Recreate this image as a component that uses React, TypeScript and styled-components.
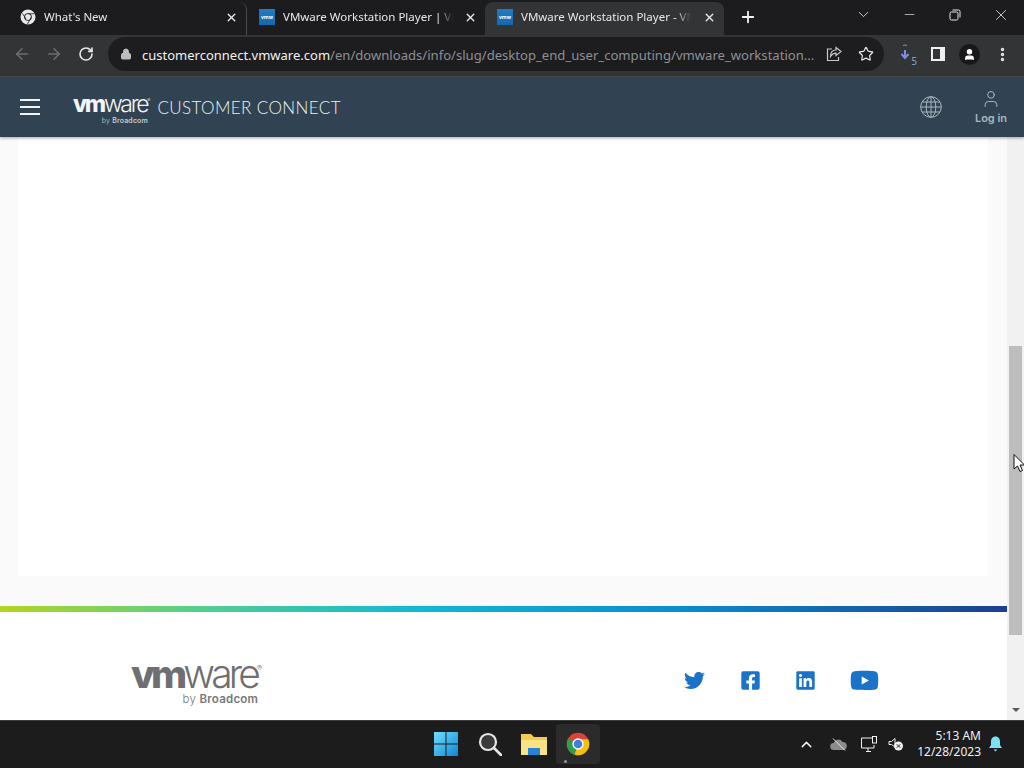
import React from 'react';
import styled, { createGlobalStyle } from 'styled-components';
import { FaTwitter, FaFacebookSquare, FaLinkedin, FaYoutube } from 'react-icons/fa';
import { ArrowLeft, ArrowRight, RotateCw, Lock, Star, X, Plus, ChevronDown, Minus, User, MoreVertical, ChevronUp } from 'lucide-react';

const GlobalStyle = createGlobalStyle`
  html, body {
    margin: 0;
    padding: 0;
    height: 768px;
    overflow: hidden;
    background: #fff;
    font-family: "Noto Sans", "Open Sans", sans-serif;
  }
`;

const TABS = [
  { title: "What's New", kind: 'chrome', width: 239 },
  { title: 'VMware Workstation Player | VM', kind: 'vmware', width: 238 },
  { title: 'VMware Workstation Player - VM', kind: 'vmware', width: 239, active: true },
];

const ChromeMark = ({ size, mono }: { size: number; mono?: boolean }) => (
  <svg width={size} height={size} viewBox="0 0 32 32">
    <circle cx="16" cy="16" r="15" fill={mono ? '#e8e8e8' : '#db4437'} />
    {!mono && (
      <>
        <path d="M16 16 L3 8.5 A15 15 0 0 0 11.5 30.3 Z" fill="#2f9e4f" />
        <path d="M16 16 L11.5 30.3 A15 15 0 0 0 29.5 9.5 L16 9.5 Z" fill="#f4c20d" />
      </>
    )}
    <circle cx="16" cy="16" r="7.6" fill={mono ? '#1c1c1e' : '#fff'} />
    <circle cx="16" cy="16" r="5.8" fill={mono ? '#e8e8e8' : '#3f7fe0'} />
    {mono && <path d="M5 9 L12 20 M16 9.5 H29 M22 17 L15 30" stroke="#1c1c1e" strokeWidth="1.6" />}
  </svg>
);

const Favicon = () => (
  <FaviconBox>
    <FaviconLabel>vmw</FaviconLabel>
  </FaviconBox>
);

export default function App() {
  return (
    <>
      <GlobalStyle />
      <Screen>
        <TabStrip>
          {TABS.map((tab, i) => (
            <Tab key={tab.title} $active={tab.active} $width={tab.width} $divider={i === 0}>
              {tab.kind === 'chrome' ? <ChromeMark size={16} mono /> : <Favicon />}
              <TabTitle>{tab.title}</TabTitle>
              <X size={13} strokeWidth={2.6} color="#e8e8e8" />
            </Tab>
          ))}
          <NewTab>
            <Plus size={18} strokeWidth={2.4} color="#f0f0f0" />
          </NewTab>
          <WindowControls>
            <WindowButton><ChevronDown size={17} strokeWidth={1.2} /></WindowButton>
            <WindowButton><Minus size={15} strokeWidth={1.1} /></WindowButton>
            <WindowButton>
              <svg width="12" height="12" viewBox="0 0 12 12" fill="none" stroke="#e8e8e8" strokeWidth="1">
                <rect x="1" y="3" width="8" height="8" rx="1.5" />
                <path d="M3.5 1 H9.5 A1.5 1.5 0 0 1 11 2.5 V8.5" />
              </svg>
            </WindowButton>
            <WindowButton><X size={18} strokeWidth={1.1} /></WindowButton>
          </WindowControls>
        </TabStrip>

        <Toolbar>
          <NavIcon><ArrowLeft size={18} color="#6d6e70" strokeWidth={2} /></NavIcon>
          <NavIcon><ArrowRight size={18} color="#6d6e70" strokeWidth={2} /></NavIcon>
          <NavIcon><RotateCw size={16} color="#e8e8e8" strokeWidth={2.4} /></NavIcon>
          <AddressBar>
            <Lock size={12} color="#bdbdbd" fill="#bdbdbd" />
            <AddressText>
              <Host>customerconnect.vmware.com</Host>
              /en/downloads/info/slug/desktop_end_user_computing/vmware_workstation...
            </AddressText>
            <svg width="16" height="16" viewBox="0 0 16 16" fill="none" stroke="#c8c8c8" strokeWidth="1.2">
              <path d="M6 3 H1.5 V14.5 H12.5 V11" />
              <path d="M15 5.5 L10 1.5 V4 C6 4 4.5 7 4.5 10.5 C6 8 8 7.2 10 7.2 V9.6 Z" />
            </svg>
            <Star size={16} color="#e8e8e8" strokeWidth={1.8} />
          </AddressBar>
          <ExtensionSlot>
            <svg width="20" height="22" viewBox="0 0 20 22">
              <path d="M7 8 V15 M3.5 12 L7 16 L10.5 12" stroke="#7d8ce8" strokeWidth="2" fill="none" />
              <path d="M5 3.5 Q7 2.5 9 3.5" stroke="#8a8fb0" strokeWidth="1" fill="none" />
            </svg>
            <BadgeDigit>5</BadgeDigit>
          </ExtensionSlot>
          <SidePanelIcon />
          <ProfileIcon><User size={13} color="#fff" fill="#fff" /></ProfileIcon>
          <MoreVertical size={17} color="#e8e8e8" strokeWidth={2.8} />
        </Toolbar>

        <Viewport>
          <NavBar>
            <Burger><i /><i /><i /></Burger>
            <Brand>
              <Wordmark>
                <LogoType $size={23}><b>vm</b>ware<sup>®</sup></LogoType>
                <ByLine $size={7}>by <b>Broadcom</b></ByLine>
              </Wordmark>
              <BrandTitle>CUSTOMER CONNECT</BrandTitle>
            </Brand>
            <NavActions>
              <svg width="22" height="22" viewBox="0 0 22 22" fill="none" stroke="#a9b5bd" strokeWidth="1">
                <circle cx="11" cy="11" r="10.3" />
                <ellipse cx="11" cy="11" rx="4.8" ry="10.3" />
                <path d="M11 0.7 V21.3 M0.7 11 H21.3 M2.2 6 H19.8 M2.2 16 H19.8" />
              </svg>
              <LogIn>
                <User size={20} color="#a9b5bd" strokeWidth={1.2} />
                <span>Log in</span>
              </LogIn>
            </NavActions>
          </NavBar>

          <PageRow>
            <Page>
              <Panel />
              <RainbowBar />
              <Footer>
                <Wordmark>
                  <LogoType $size={39} $dark><b>vm</b>ware<sup>®</sup></LogoType>
                  <ByLine $size={11.5} $dark>by <b>Broadcom</b></ByLine>
                </Wordmark>
                <Socials>
                  <SocialSlot><FaTwitter size={21} /></SocialSlot>
                  <SocialSlot><FaFacebookSquare size={21} /></SocialSlot>
                  <SocialSlot><FaLinkedin size={21} /></SocialSlot>
                  <SocialSlot><FaYoutube size={29} /></SocialSlot>
                </Socials>
              </Footer>
            </Page>
            <ScrollTrack>
              <ScrollThumb />
              <ScrollArrow />
            </ScrollTrack>
          </PageRow>
        </Viewport>

        <Taskbar>
          <TaskIcons>
            <TaskIcon>
              <svg width="24" height="24" viewBox="0 0 24 24">
                <defs>
                  <linearGradient id="win" x1="0" y1="0" x2="1" y2="1">
                    <stop offset="0" stopColor="#6fe0fb" />
                    <stop offset="1" stopColor="#0f84d8" />
                  </linearGradient>
                </defs>
                <path d="M0 0H11.5V11.5H0Z M12.5 0H24V11.5H12.5Z M0 12.5H11.5V24H0Z M12.5 12.5H24V24H12.5Z" fill="url(#win)" />
              </svg>
            </TaskIcon>
            <TaskIcon>
              <svg width="24" height="24" viewBox="0 0 24 24" fill="none">
                <circle cx="10" cy="10" r="8" fill="#3a3a3a" stroke="#e6e6e6" strokeWidth="2.2" />
                <path d="M16 16 L23 23" stroke="#e6e6e6" strokeWidth="2.6" strokeLinecap="round" />
              </svg>
            </TaskIcon>
            <TaskIcon>
              <svg width="26" height="24" viewBox="0 0 26 24">
                <path d="M0 2 H10 L13 5 H26 V23 H0 Z" fill="#f3c94f" />
                <path d="M0 8 H26 V23 H0 Z" fill="#fbe283" />
                <path d="M7 16 H19 V23 H7 Z" fill="#2683d8" />
              </svg>
            </TaskIcon>
            <TaskIcon $active>
              <ChromeMark size={24} />
              <RunningDot />
            </TaskIcon>
          </TaskIcons>
          <Tray>
            <ChevronUp size={17} color="#f0f0f0" strokeWidth={2} />
            <TrayCloud>
              <svg width="17" height="13" viewBox="0 0 17 13">
                <path d="M4 12 A3.5 3.5 0 0 1 3.5 5 A5 5 0 0 1 12.5 4 A4 4 0 0 1 13 12 Z" fill="#8b8b8b" />
                <path d="M3 0.5 L15 12.5" stroke="#e8e8e8" strokeWidth="1" />
              </svg>
            </TrayCloud>
            <TrayMonitor>
              <svg width="17" height="17" viewBox="0 0 17 17" fill="none" stroke="#f0f0f0" strokeWidth="1">
                <path d="M11 2 H0.5 V12 H13 V9" />
                <path d="M5 15.5 H10 M7 12 V15.5" />
                <rect x="11.5" y="0.5" width="4" height="6.5" />
              </svg>
            </TrayMonitor>
            <TraySpeaker>
              <svg width="16" height="14" viewBox="0 0 16 14">
                <path d="M1 4.5 H3.5 L7 1.5 V10 L3.5 7.5 H1 Z" fill="none" stroke="#f0f0f0" strokeWidth="1" />
                <circle cx="10.5" cy="9" r="4.5" fill="#f0f0f0" />
                <path d="M8.8 7.3 L12.2 10.7 M12.2 7.3 L8.8 10.7" stroke="#1c1c1c" strokeWidth="1" />
              </svg>
            </TraySpeaker>
            <Clock>
              <span>5:13 AM</span>
              <span>12/28/2023</span>
            </Clock>
            <svg width="15" height="16" viewBox="0 0 15 16">
              <path d="M7.5 0.5 C4.5 0.5 3 3 3 5.5 V9 L1 12 H14 L12 9 V5.5 C12 3 10.5 0.5 7.5 0.5 Z M5.5 13.5 H9.5 L7.5 15.5 Z" fill="#7fe0f5" />
            </svg>
          </Tray>
        </Taskbar>

        <Pointer>
          <svg width="12" height="20" viewBox="0 0 12 19">
            <path d="M1 1 V15.5 L4.5 12.5 L7 18 L9.5 17 L7 11.5 H11.5 Z" fill="#fff" stroke="#111" strokeWidth="1" />
          </svg>
        </Pointer>
      </Screen>
    </>
  );
}

const Screen = styled.div`
  position: relative;
  width: 1024px;
  height: 768px;
  display: flex;
  flex-direction: column;
  overflow: hidden;
`;

const TabStrip = styled.div`
  height: 35px;
  flex: none;
  display: flex;
  align-items: flex-end;
  padding-left: 8px;
  background: #1c1c1e;
`;

const Tab = styled.div<{ $active?: boolean; $width: number; $divider?: boolean }>`
  box-sizing: border-box;
  width: ${(p) => p.$width}px;
  height: 33px;
  display: flex;
  align-items: center;
  gap: 8px;
  padding: 0 8px 3px 12px;
  border-radius: 8px 8px 0 0;
  background: ${(p) => (p.$active ? '#333436' : 'transparent')};
  border-right: ${(p) => (p.$divider ? '1px solid #4a4a4c' : '0')};
`;

const TabTitle = styled.div`
  flex: 1;
  min-width: 0;
  margin-top: -1px;
  white-space: nowrap;
  font-size: 11.5px;
  color: #e8e8e8;
  -webkit-mask-image: linear-gradient(to right, #000 155px, transparent 170px);
  mask-image: linear-gradient(to right, #000 155px, transparent 170px);
`;

const FaviconBox = styled.div`
  width: 16px;
  height: 16px;
  flex: none;
  display: flex;
  align-items: center;
  justify-content: center;
  background: linear-gradient(#1f7cc6, #1469ac);
`;

const FaviconLabel = styled.span`
  font-size: 5px;
  font-weight: 700;
  line-height: 1;
  color: #fff;
`;

const NewTab = styled.div`
  width: 44px;
  height: 33px;
  margin-left: 2px;
  display: flex;
  align-items: center;
  justify-content: center;
  padding-bottom: 3px;
  box-sizing: border-box;
`;

const WindowControls = styled.div`
  margin-left: auto;
  height: 35px;
  display: flex;
  align-items: flex-start;
  color: #e8e8e8;
`;

const WindowButton = styled.div`
  width: 46px;
  height: 29px;
  display: flex;
  align-items: center;
  justify-content: center;
`;

const Toolbar = styled.div`
  box-sizing: border-box;
  height: 42px;
  flex: none;
  display: flex;
  align-items: center;
  padding: 0 0 3px 6px;
  background: #333436;
  border-bottom: 1px solid #4b4c4e;
`;

const NavIcon = styled.div`
  width: 32px;
  height: 32px;
  display: flex;
  align-items: center;
  justify-content: center;
`;

const AddressBar = styled.div`
  box-sizing: border-box;
  width: 776px;
  height: 34px;
  margin-left: 6px;
  display: flex;
  align-items: center;
  gap: 16px;
  padding: 0 10px 0 12px;
  border-radius: 17px;
  background: #1d1d20;
`;

const AddressText = styled.div`
  flex: 1;
  min-width: 0;
  margin-left: -6px;
  padding-top: 1px;
  font-size: 13.1px;
  white-space: nowrap;
  color: #8e8f92;
`;

const Host = styled.span`
  font-size: 13px;
  color: #f0f0f0;
`;

const ExtensionSlot = styled.div`
  position: relative;
  width: 22px;
  height: 24px;
  margin-left: 14px;
`;

const BadgeDigit = styled.span`
  position: absolute;
  right: 3px;
  bottom: 0;
  font-size: 10px;
  line-height: 1;
  color: #8aa0c8;
`;

const SidePanelIcon = styled.div`
  box-sizing: border-box;
  width: 14px;
  height: 14px;
  margin-left: 11px;
  border: 2px solid #f0f0f0;
  border-right-width: 5px;
  background: #333436;
`;

const ProfileIcon = styled.div`
  width: 21px;
  height: 21px;
  margin: 0 14px 0 14px;
  display: flex;
  align-items: center;
  justify-content: center;
  border-radius: 50%;
  background: #18181a;
`;

const Viewport = styled.div`
  flex: 1;
  min-height: 0;
  display: flex;
  flex-direction: column;
`;

const NavBar = styled.header`
  box-sizing: border-box;
  height: 60px;
  flex: none;
  display: flex;
  align-items: center;
  padding: 0 12px 0 20px;
  background: #314352;
  box-shadow: 0 1px 3px rgba(0, 0, 0, 0.35);
  z-index: 1;
`;

const Burger = styled.div`
  width: 20px;
  display: flex;
  flex-direction: column;
  gap: 5px;

  i {
    display: block;
    height: 2px;
    background: #f0f3f5;
  }
`;

const Brand = styled.div`
  margin: 3px 0 0 33px;
  display: flex;
  align-items: flex-start;
  gap: 7px;
`;

const Wordmark = styled.div`
  display: flex;
  flex-direction: column;
`;

const LogoType = styled.div<{ $size: number; $dark?: boolean }>`
  font-family: "Inter", sans-serif;
  font-size: ${(p) => p.$size}px;
  line-height: 1;
  font-weight: 300;
  letter-spacing: -0.1em;
  white-space: nowrap;
  color: ${(p) => (p.$dark ? '#6f6f71' : '#f2f4f6')};

  b {
    font-weight: 800;
  }

  sup {
    font-size: 0.2em;
    line-height: 0;
    letter-spacing: 0;
    vertical-align: 2.2em;
  }
`;

const ByLine = styled.div<{ $size: number; $dark?: boolean }>`
  margin-top: 1px;
  font-family: "Inter", sans-serif;
  font-size: ${(p) => p.$size}px;
  line-height: 1;
  letter-spacing: 0.02em;
  font-weight: 300;
  text-align: right;
  padding-right: 0.35em;
  color: ${(p) => (p.$dark ? '#77777a' : '#c3cbd1')};

  b {
    font-weight: 600;
  }
`;

const BrandTitle = styled.div`
  margin-top: 2px;
  font-family: "Lato", sans-serif;
  font-size: 17px;
  line-height: 26px;
  font-weight: 300;
  letter-spacing: 0.4px;
  color: #eef1f3;
`;

const NavActions = styled.div`
  margin-left: auto;
  display: flex;
  align-items: center;
  gap: 28px;
`;

const LogIn = styled.div`
  width: 42px;
  display: flex;
  flex-direction: column;
  align-items: center;
  gap: 2px;
  font-family: "Inter", sans-serif;
  font-size: 11px;
  font-weight: 600;
  color: #a9b5bd;
`;

const PageRow = styled.div`
  flex: 1;
  min-height: 0;
  display: flex;
`;

const Page = styled.main`
  flex: 1;
  min-width: 0;
  display: flex;
  flex-direction: column;
  background: #fafafb;
`;

const Panel = styled.section`
  height: 439px;
  margin: 0 19px 30px 18px;
  background: #fff;
`;

const RainbowBar = styled.div`
  height: 6px;
  flex: none;
  background: linear-gradient(to right, #b4d51c 0%, #52cf90 20%, #0fb8d6 42%, #0a8ccb 68%, #1b3f8f 100%);
`;

const Footer = styled.footer`
  flex: 1;
  display: flex;
  align-items: flex-start;
  padding: 42px 111px 0 131px;
  background: #fff;
`;

const Socials = styled.div`
  margin: 13px 0 0 auto;
  display: grid;
  grid-template-columns: 56px 56px 54px 64px;
  color: #1a73c8;
`;

const SocialSlot = styled.div`
  height: 26px;
  display: flex;
  align-items: center;
  justify-content: center;
`;

const ScrollTrack = styled.div`
  box-sizing: border-box;
  width: 17px;
  flex: none;
  padding: 209px 2px 0;
  display: flex;
  flex-direction: column;
  align-items: center;
  background: #f1f1f1;
`;

const ScrollThumb = styled.div`
  width: 13px;
  height: 289px;
  background: #bdbdbd;
`;

const ScrollArrow = styled.div`
  margin-top: 73px;
  width: 0;
  height: 0;
  border-style: solid;
  border-width: 4px 4px 0;
  border-color: #5a5a5a transparent transparent;
`;

const Taskbar = styled.div`
  box-sizing: border-box;
  height: 48px;
  flex: none;
  display: flex;
  align-items: center;
  padding: 0 0 1px 424px;
  background: #1c1c1c;
  border-top: 1px solid #3c3c3c;
`;

const TaskIcons = styled.div`
  display: flex;
  align-items: center;
`;

const TaskIcon = styled.div<{ $active?: boolean }>`
  position: relative;
  width: 44px;
  height: 40px;
  display: flex;
  align-items: center;
  justify-content: center;
  border-radius: 4px;
  background: ${(p) => (p.$active ? '#2b2b2b' : 'transparent')};
`;

const RunningDot = styled.span`
  position: absolute;
  left: 8px;
  bottom: 1px;
  width: 3px;
  height: 3px;
  border-radius: 50%;
  background: #9a9a9a;
`;

const Tray = styled.div`
  margin-left: auto;
  padding-right: 21px;
  display: flex;
  align-items: center;
  color: #f0f0f0;
`;

const TrayCloud = styled.div`
  display: flex;
  margin-left: 15px;
`;

const TrayMonitor = styled.div`
  display: flex;
  margin-left: 14px;
`;

const TraySpeaker = styled.div`
  display: flex;
  margin-left: 10px;
`;

const Clock = styled.div`
  width: 62px;
  margin: 0 7px 0 15px;
  display: flex;
  flex-direction: column;
  align-items: flex-end;
  font-size: 12px;
  line-height: 16px;
  white-space: nowrap;
`;

const Pointer = styled.div`
  position: absolute;
  left: 1013px;
  top: 453px;
  display: flex;
`;
